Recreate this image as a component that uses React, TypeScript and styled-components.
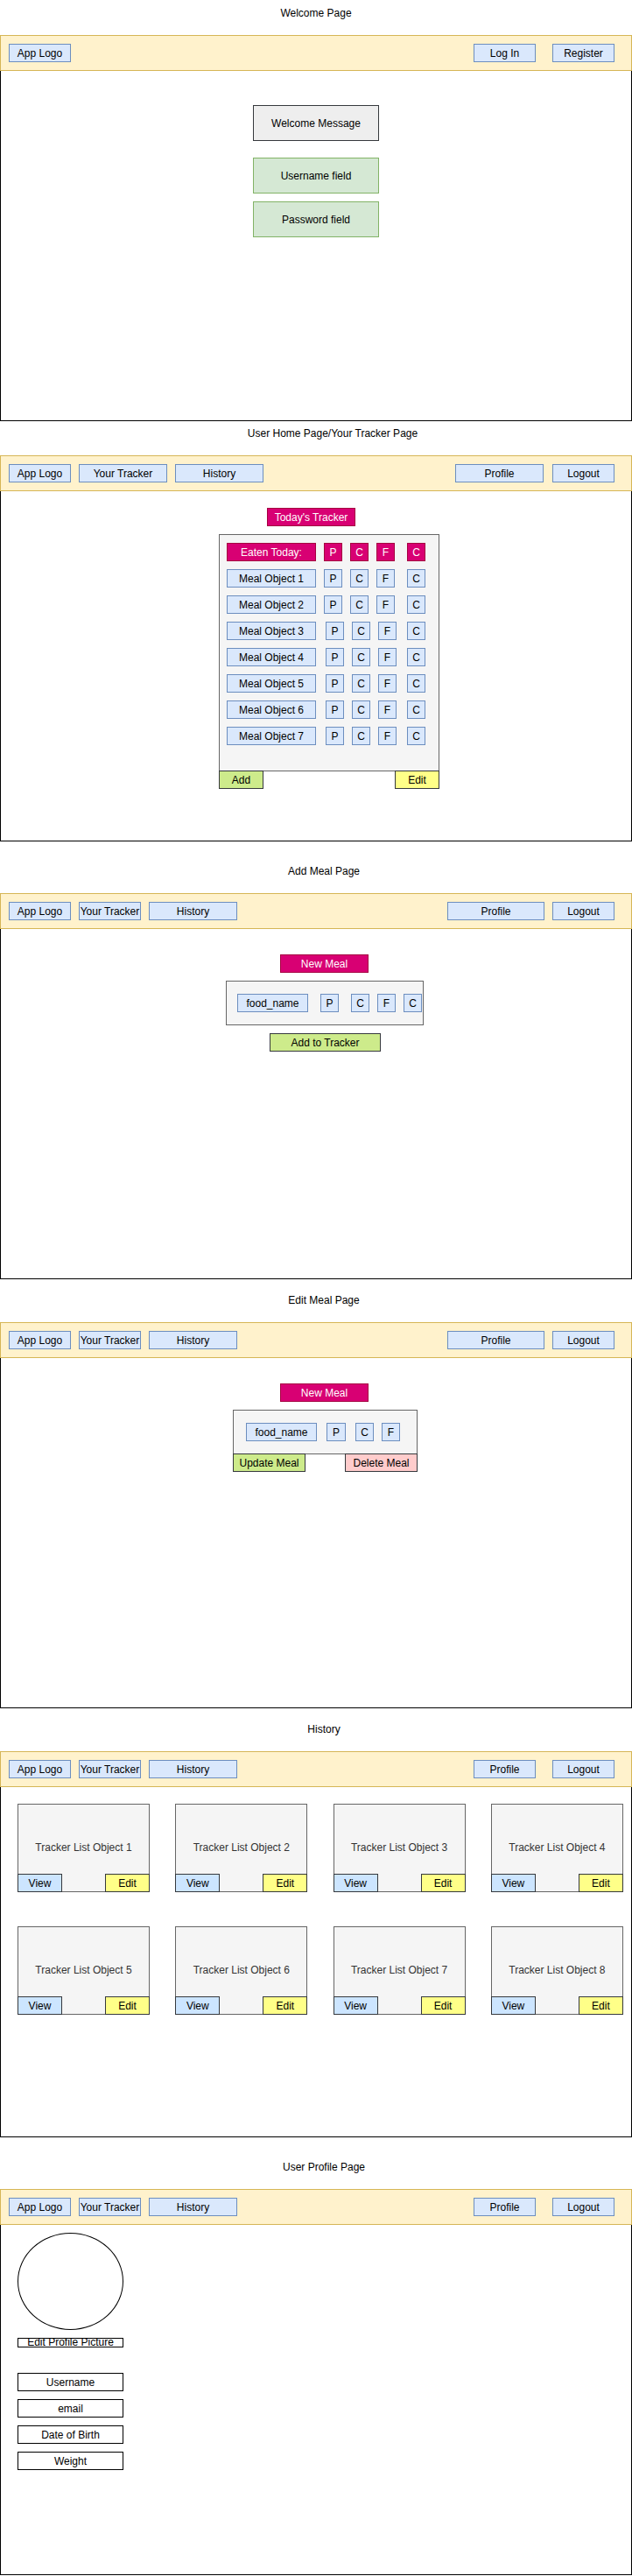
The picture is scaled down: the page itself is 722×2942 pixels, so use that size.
import React from "react";
import styled, { createGlobalStyle } from "styled-components";

const GlobalStyle = createGlobalStyle`
  html, body { margin: 0; padding: 0; background: #ffffff; }
  body {
    font-family: "Liberation Sans", Arial, Helvetica, sans-serif;
    font-size: 12px;
    color: #000000;
  }
  *, *::before, *::after { box-sizing: border-box; }
`;

const tones = {
  nav: { bg: "#dae8fc", border: "#6c8ebf", fg: "#000000" },
  accent: { bg: "#d80073", border: "#a50040", fg: "#ffffff" },
  green: { bg: "#cdeb8b", border: "#36393d", fg: "#000000" },
  yellow: { bg: "#ffff88", border: "#36393d", fg: "#000000" },
  view: { bg: "#cce5ff", border: "#36393d", fg: "#000000" },
  red: { bg: "#ffcccc", border: "#36393d", fg: "#000000" },
  field: { bg: "#d5e8d4", border: "#82b366", fg: "#000000" },
  grey: { bg: "#eeeeee", border: "#36393d", fg: "#000000" },
  plain: { bg: "#ffffff", border: "#000000", fg: "#000000" },
};
type Tone = keyof typeof tones;

type BlockProps = { $w: number; $h?: number; $tone?: Tone; $mt?: number; $ml?: number };

const Block = styled.div<BlockProps>`
  flex: none;
  display: flex;
  align-items: center;
  justify-content: center;
  width: ${(p) => p.$w}px;
  height: ${(p) => p.$h ?? 21}px;
  margin-top: ${(p) => p.$mt ?? 0}px;
  margin-left: ${(p) => p.$ml ?? 0}px;
  background: ${(p) => tones[p.$tone ?? "nav"].bg};
  border: 1px solid ${(p) => tones[p.$tone ?? "nav"].border};
  color: ${(p) => tones[p.$tone ?? "nav"].fg};
  white-space: nowrap;
  line-height: 14px;
`;

const Page = styled.div`
  width: 722px;
  display: flex;
  flex-direction: column;
`;

const Section = styled.section<{ $mt?: number }>`
  display: flex;
  flex-direction: column;
  margin-top: ${(p) => p.$mt ?? 0}px;
`;

const SectionTitle = styled.div<{ $shift: number }>`
  height: 40px;
  padding-top: 8px;
  padding-left: ${(p) => p.$shift}px;
  text-align: center;
  line-height: 14px;
  color: #000000;
`;

const Frame = styled.div`
  height: 441px;
  display: flex;
  flex-direction: column;
`;

const NavBar = styled.header`
  height: 41px;
  flex: none;
  display: flex;
  align-items: center;
  justify-content: space-between;
  padding: 0 19px 0 9px;
  background: #fff2cc;
  border: 1px solid #d6b656;
`;

const NavGroup = styled.div<{ $gap: number }>`
  display: flex;
  gap: ${(p) => p.$gap}px;
`;

const NavButton = styled(Block)``;

const Body = styled.main<{ $center?: boolean }>`
  flex: 1;
  display: flex;
  flex-direction: column;
  align-items: ${(p) => (p.$center ? "center" : "flex-start")};
  border: 1px solid #000000;
  border-top: none;
`;

const WelcomeBox = styled(Block)``;
const FieldBox = styled(Block)``;
const Heading = styled(Block)``;

const StackWrap = styled.div<{ $w: number; $mt: number; $ml: number }>`
  width: ${(p) => p.$w}px;
  margin-top: ${(p) => p.$mt}px;
  margin-left: ${(p) => p.$ml}px;
  display: flex;
  flex-direction: column;
`;

const Panel = styled.div<{ $h: number; $pl: number; $pt: number; $w?: number; $mt?: number; $ml?: number }>`
  width: ${(p) => (p.$w ? `${p.$w}px` : "100%")};
  height: ${(p) => p.$h}px;
  margin-top: ${(p) => p.$mt ?? 0}px;
  margin-left: ${(p) => p.$ml ?? 0}px;
  padding: ${(p) => p.$pt}px 0 0 ${(p) => p.$pl}px;
  background: #f5f5f5;
  border: 1px solid #666666;
  display: flex;
  flex-direction: column;
  gap: 9px;
`;

const MacroRow = styled.div`
  display: flex;
`;

const NameCell = styled(Block)``;
const MacroCell = styled(Block)``;

const ButtonRow = styled.div`
  display: flex;
  justify-content: space-between;
  margin-top: -1px;
`;

const ActionButton = styled(Block)``;

const CardGrid = styled.div`
  display: grid;
  grid-template-columns: repeat(4, 151px);
  column-gap: 29.3px;
  row-gap: 39px;
  margin: 19px 0 0 19px;
`;

const Card = styled.div`
  height: 101px;
  display: flex;
  flex-direction: column;
  background: #f5f5f5;
  border: 1px solid #666666;
`;

const CardLabel = styled.div`
  flex: 1;
  display: flex;
  align-items: center;
  justify-content: center;
  padding-top: 19px;
  color: #333333;
  white-space: nowrap;
`;

const CardActions = styled.div`
  display: flex;
  justify-content: space-between;
  margin: 0 -1px -1px -1px;
`;

const Avatar = styled.div`
  width: 121px;
  height: 111px;
  margin: 9px 0 0 19px;
  border: 1px solid #000000;
  border-radius: 50%;
  background: #ffffff;
`;

const PictureButton = styled(Block)`
  line-height: 9px;
  overflow: visible;
`;

const ProfileField = styled(Block)``;

type NavItem = { label: string; w: number };

const NavHeader: React.FC<{ left: NavItem[]; right: NavItem[]; rightGap: number }> = ({ left, right, rightGap }) => (
  <NavBar>
    <NavGroup $gap={9}>
      {left.map((b) => (
        <NavButton key={b.label} $w={b.w}>
          {b.label}
        </NavButton>
      ))}
    </NavGroup>
    <NavGroup $gap={rightGap}>
      {right.map((b) => (
        <NavButton key={b.label} $w={b.w}>
          {b.label}
        </NavButton>
      ))}
    </NavGroup>
  </NavBar>
);

const trackerRows: { name: string; tone: Tone; gaps: number[] }[] = [
  { name: "Eaten Today:", tone: "accent", gaps: [9, 9, 9, 14] },
  { name: "Meal Object 1", tone: "nav", gaps: [9, 9, 9, 14] },
  { name: "Meal Object 2", tone: "nav", gaps: [9, 9, 9, 14] },
  { name: "Meal Object 3", tone: "nav", gaps: [11, 9, 9, 12] },
  { name: "Meal Object 4", tone: "nav", gaps: [11, 9, 9, 12] },
  { name: "Meal Object 5", tone: "nav", gaps: [11, 9, 9, 12] },
  { name: "Meal Object 6", tone: "nav", gaps: [11, 9, 9, 12] },
  { name: "Meal Object 7", tone: "nav", gaps: [11, 9, 9, 12] },
];

const macros = ["P", "C", "F", "C"];

const loggedLeft3: NavItem[] = [
  { label: "App Logo", w: 71 },
  { label: "Your Tracker", w: 71 },
  { label: "History", w: 101 },
];

export default function App() {
  return (
    <>
      <GlobalStyle />
      <Page>
        {/* Welcome */}
        <Section>
          <SectionTitle $shift={0}>Welcome Page</SectionTitle>
          <Frame>
            <NavHeader
              left={[{ label: "App Logo", w: 71 }]}
              right={[
                { label: "Log In", w: 71 },
                { label: "Register", w: 71 },
              ]}
              rightGap={19}
            />
            <Body $center>
              <WelcomeBox $w={144} $h={41} $tone="grey" $mt={39}>
                Welcome Message
              </WelcomeBox>
              <FieldBox $w={144} $h={41} $tone="field" $mt={19}>
                Username field
              </FieldBox>
              <FieldBox $w={144} $h={41} $tone="field" $mt={9}>
                Password field
              </FieldBox>
            </Body>
          </Frame>
        </Section>

        {/* Home / tracker */}
        <Section $mt={-1}>
          <SectionTitle $shift={38}>User Home Page/Your Tracker Page</SectionTitle>
          <Frame>
            <NavHeader
              left={[
                { label: "App Logo", w: 71 },
                { label: "Your Tracker", w: 101 },
                { label: "History", w: 101 },
              ]}
              right={[
                { label: "Profile", w: 101 },
                { label: "Logout", w: 71 },
              ]}
              rightGap={10}
            />
            <Body>
              <Heading $w={101} $tone="accent" $mt={19} $ml={304}>
                Today's Tracker
              </Heading>
              <StackWrap $w={252} $mt={9} $ml={249}>
                <Panel $h={271} $pt={9} $pl={8}>
                  {trackerRows.map((r) => (
                    <MacroRow key={r.name}>
                      <NameCell $w={102} $tone={r.tone}>
                        {r.name}
                      </NameCell>
                      {macros.map((m, i) => (
                        <MacroCell key={i} $w={21} $tone={r.tone} $ml={r.gaps[i]}>
                          {m}
                        </MacroCell>
                      ))}
                    </MacroRow>
                  ))}
                </Panel>
                <ButtonRow>
                  <ActionButton $w={51} $tone="green">
                    Add
                  </ActionButton>
                  <ActionButton $w={51} $tone="yellow">
                    Edit
                  </ActionButton>
                </ButtonRow>
              </StackWrap>
            </Body>
          </Frame>
        </Section>

        {/* Add meal */}
        <Section $mt={19}>
          <SectionTitle $shift={18}>Add Meal Page</SectionTitle>
          <Frame>
            <NavHeader
              left={loggedLeft3}
              right={[
                { label: "Profile", w: 111 },
                { label: "Logout", w: 71 },
              ]}
              rightGap={9}
            />
            <Body>
              <Heading $w={101} $tone="accent" $mt={29} $ml={319}>
                New Meal
              </Heading>
              <Panel $w={226} $h={51} $pt={14} $pl={12} $mt={9} $ml={257}>
                <MacroRow>
                  <NameCell $w={81}>food_name</NameCell>
                  {macros.map((m, i) => (
                    <MacroCell key={i} $w={21} $ml={[14, 14, 9, 9][i]}>
                      {m}
                    </MacroCell>
                  ))}
                </MacroRow>
              </Panel>
              <ActionButton $w={127} $tone="green" $mt={9} $ml={307}>
                Add to Tracker
              </ActionButton>
            </Body>
          </Frame>
        </Section>

        {/* Edit meal */}
        <Section $mt={9}>
          <SectionTitle $shift={18}>Edit Meal Page</SectionTitle>
          <Frame>
            <NavHeader
              left={loggedLeft3}
              right={[
                { label: "Profile", w: 111 },
                { label: "Logout", w: 71 },
              ]}
              rightGap={9}
            />
            <Body>
              <Heading $w={101} $tone="accent" $mt={29} $ml={319}>
                New Meal
              </Heading>
              <StackWrap $w={211} $mt={9} $ml={265}>
                <Panel $h={51} $pt={14} $pl={14}>
                  <MacroRow>
                    <NameCell $w={81}>food_name</NameCell>
                    <MacroCell $w={22} $ml={11}>
                      P
                    </MacroCell>
                    <MacroCell $w={21} $ml={11}>
                      C
                    </MacroCell>
                    <MacroCell $w={21} $ml={9}>
                      F
                    </MacroCell>
                  </MacroRow>
                </Panel>
                <ButtonRow>
                  <ActionButton $w={83} $tone="green">
                    Update Meal
                  </ActionButton>
                  <ActionButton $w={83} $tone="red">
                    Delete Meal
                  </ActionButton>
                </ButtonRow>
              </StackWrap>
            </Body>
          </Frame>
        </Section>

        {/* History */}
        <Section $mt={9}>
          <SectionTitle $shift={18}>History</SectionTitle>
          <Frame>
            <NavHeader
              left={loggedLeft3}
              right={[
                { label: "Profile", w: 71 },
                { label: "Logout", w: 71 },
              ]}
              rightGap={19}
            />
            <Body>
              <CardGrid>
                {Array.from({ length: 8 }, (_, i) => (
                  <Card key={i}>
                    <CardLabel>Tracker List Object {i + 1}</CardLabel>
                    <CardActions>
                      <ActionButton $w={51} $tone="view">
                        View
                      </ActionButton>
                      <ActionButton $w={51} $tone="yellow">
                        Edit
                      </ActionButton>
                    </CardActions>
                  </Card>
                ))}
              </CardGrid>
            </Body>
          </Frame>
        </Section>

        {/* Profile */}
        <Section $mt={19}>
          <SectionTitle $shift={18}>User Profile Page</SectionTitle>
          <Frame>
            <NavHeader
              left={loggedLeft3}
              right={[
                { label: "Profile", w: 71 },
                { label: "Logout", w: 71 },
              ]}
              rightGap={19}
            />
            <Body>
              <Avatar />
              <PictureButton $w={121} $h={11} $tone="plain" $mt={9} $ml={19}>
                Edit Profile Picture
              </PictureButton>
              <ProfileField $w={121} $tone="plain" $mt={29} $ml={19}>
                Username
              </ProfileField>
              <ProfileField $w={121} $tone="plain" $mt={9} $ml={19}>
                email
              </ProfileField>
              <ProfileField $w={121} $tone="plain" $mt={9} $ml={19}>
                Date of Birth
              </ProfileField>
              <ProfileField $w={121} $tone="plain" $mt={9} $ml={19}>
                Weight
              </ProfileField>
            </Body>
          </Frame>
        </Section>
      </Page>
    </>
  );
}
